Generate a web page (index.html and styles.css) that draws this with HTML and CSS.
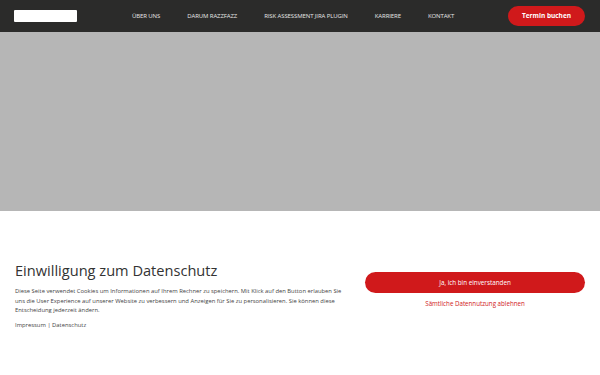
FILE: index.html
```html
<!DOCTYPE html>
<html>
<head>
  <title>Razzfazz</title>
  <link rel="stylesheet" href="styles.css">
</head>
<body>

  <header class="site-header">
    <div class="logo"></div>
    <nav class="main-nav">
      <a href="#">ÜBER UNS</a>
      <a href="#">DARUM RAZZFAZZ</a>
      <a href="#">RISK ASSESSMENT JIRA PLUGIN</a>
      <a href="#">KARRIERE</a>
      <a href="#">KONTAKT</a>
    </nav>
    <a class="book-button" href="#">Termin buchen</a>
  </header>

  <div class="hero"></div>

  <!-- Cookie consent -->
  <section class="consent">
    <div class="consent-text">
      <h1>Einwilligung zum Datenschutz</h1>
      <p>Diese Seite verwendet Cookies um Informationen auf Ihrem Rechner zu speichern. Mit Klick auf den Button erlauben Sie uns die User Experience auf unserer Website zu verbessern und Anzeigen für Sie zu personalisieren. Sie können diese Entscheidung jederzeit ändern.</p>
      <p class="consent-links"><a href="#">Impressum</a> | <a href="#">Datenschutz</a></p>
    </div>
    <div class="consent-actions">
      <button class="accept-button">Ja, ich bin einverstanden</button>
      <a class="decline-link" href="#">Sämtliche Datennutzung ablehnen</a>
    </div>
  </section>

</body>
</html>
```

FILE: styles.css
```css
body {
  margin: 0;
  font-family: 'Open Sans', sans-serif;
  background-color: #fff;
  color: #333;
}

/* Header */
.site-header {
  height: 32px;
  background-color: #2b2b2a;
  display: flex;
  align-items: center;
  padding: 0 15px 0 14px;
}

.logo {
  width: 63px;
  height: 12px;
  background-color: #fff;
  border-radius: 1px;
}

.main-nav {
  display: flex;
  gap: 27px;
  margin-left: 55px;
  flex-grow: 1;
}

.main-nav a {
  color: #e6e6e6;
  text-decoration: none;
  font-size: 6px;
  letter-spacing: -0.1px;
}

.book-button {
  width: 77px;
  height: 20px;
  line-height: 20px;
  text-align: center;
  background-color: #d0191b;
  color: #fff;
  font-weight: bold;
  font-size: 6.5px;
  text-decoration: none;
  border-radius: 10px;
}

/* Hero placeholder */
.hero {
  height: 179px;
  background-color: #b6b6b6;
}

/* Consent box */
.consent {
  display: flex;
  padding: 49px 15px 0 15px;
  gap: 20px;
}

.consent-text {
  width: 330px;
}

.consent h1 {
  font-weight: normal;
  font-size: 14.6px;
  margin: 0 0 7px 0;
  color: #333;
}

.consent p {
  font-size: 5.85px;
  line-height: 9.5px;
  margin: 0 0 5px 0;
  color: #444;
}

.consent-links a {
  color: #444;
  text-decoration: none;
}

.consent-actions {
  flex-grow: 1;
  display: flex;
  flex-direction: column;
  align-items: center;
  padding-top: 12px;
}

.accept-button {
  width: 100%;
  height: 21px;
  border: none;
  border-radius: 11px;
  background-color: #d0191b;
  color: #fff;
  font-family: 'Open Sans', sans-serif;
  font-size: 6.3px;
  cursor: pointer;
}

.decline-link {
  margin-top: 6px;
  color: #d0191b;
  font-size: 6.2px;
  text-decoration: none;
}
```
